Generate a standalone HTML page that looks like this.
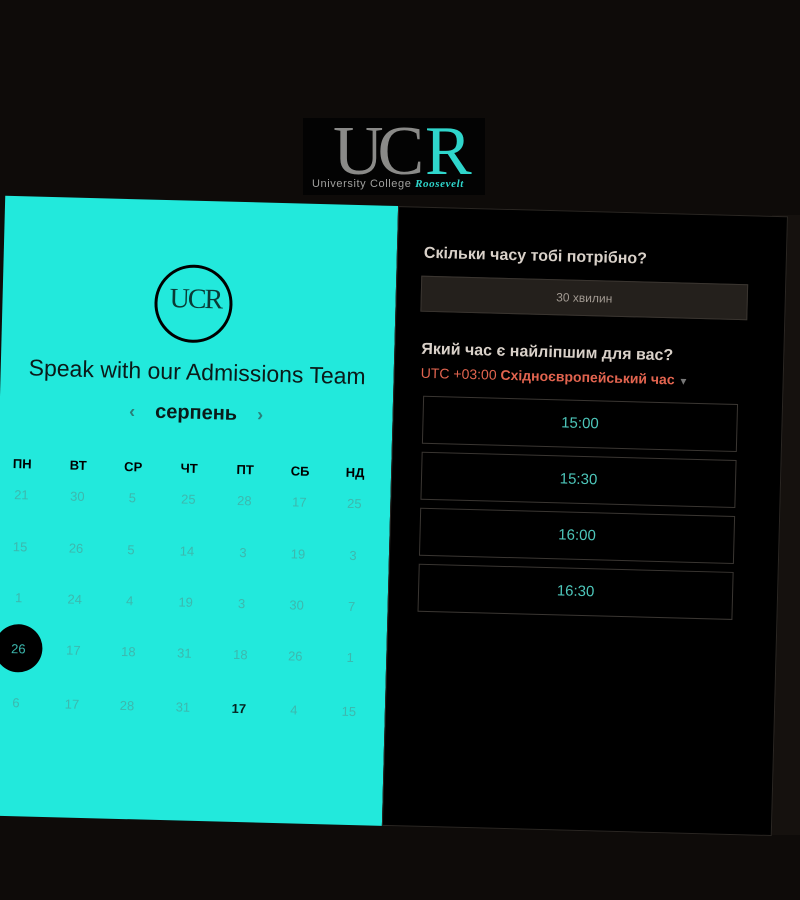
<!DOCTYPE html>
<html><head><meta charset="utf-8"><style>
html,body{margin:0;padding:0;}
body{width:800px;height:900px;background:#0e0b09;position:relative;overflow:hidden;font-family:"Liberation Sans",sans-serif;}
.strip{position:absolute;left:772px;top:215px;width:28px;height:620px;background:#15110e;}
.logo{position:absolute;left:303px;top:118px;width:182px;height:77px;background:#030303;}
.logo .u{position:absolute;left:30px;top:-6px;font-family:"Liberation Serif",serif;font-size:70px;color:#8a8a88;letter-spacing:-6px;}
.logo .r{position:absolute;left:122px;top:-6px;font-family:"Liberation Serif",serif;font-size:70px;color:#2fd6cc;}
.logo .t{position:absolute;left:9px;top:60px;font-size:11px;color:#a0a09e;letter-spacing:0.6px;white-space:nowrap;}
.logo .t i{color:#2fd6cc;font-family:"Liberation Serif",serif;font-weight:bold;}
.card{position:absolute;left:-3px;top:206px;width:783px;height:620px;transform:rotate(1.5deg);transform-origin:395px 310px;}
.left{position:absolute;left:0;top:0;width:393px;height:620px;background:#22e9dc;}
.right{position:absolute;left:393px;top:0;width:390px;height:620px;background:#000;border:1px solid #2a2622;box-sizing:border-box;}
.a{position:absolute;white-space:nowrap;}
.circ{left:152px;top:64px;width:72px;height:72px;border:3px solid #000;border-radius:50%;}
.circ span{position:absolute;left:12px;top:16px;font-family:"Liberation Serif",serif;font-size:28px;color:#0a3a36;letter-spacing:-2px;}
.title{left:0;width:393px;text-align:center;top:158px;font-size:23px;color:#0b1a19;}
.month{left:0;width:393px;text-align:center;top:201px;font-size:20px;font-weight:bold;color:#0b1a19;}
.month b{color:#2a7e78;font-size:18px;margin:0 20px;}
.h{font-size:13px;font-weight:bold;color:#000;transform:translateX(-50%);}
.d{font-size:13px;color:#3cb8ae;transform:translateX(-50%);}
.sel{width:48px;height:48px;border-radius:50%;background:#000;transform:translate(-50%,-50%);}
.q{font-size:16px;font-weight:bold;color:#d9d1c9;}
.dd{left:24px;top:68px;width:327px;height:36px;background:#24201c;border:1px solid #3a3530;box-sizing:border-box;text-align:center;line-height:34px;font-size:12px;color:#a29a92;}
.tz{font-size:14px;color:#e2644f;}
.slot{left:29px;width:315px;height:48px;border:1px solid #3a3632;box-sizing:border-box;text-align:center;line-height:46px;font-size:15px;color:#4dc6ba;}
</style></head><body>
<div class="strip"></div>
<div class="logo"><span class="u">UC</span><span class="r">R</span><div class="t">University College <i>Roosevelt</i></div></div>
<div class="card">
<div class="left">
<div class="a circ"><span>UCR</span></div>
<div class="a title">Speak with our Admissions Team</div>
<div class="a month"><b>‹</b>серпень<b>›</b></div>
<div class="a h" style="left:24px;top:260px">ПН</div><div class="a h" style="left:80px;top:260px">ВТ</div><div class="a h" style="left:135px;top:260px">СР</div><div class="a h" style="left:191px;top:260px">ЧТ</div><div class="a h" style="left:247px;top:260px">ПТ</div><div class="a h" style="left:302px;top:260px">СБ</div><div class="a h" style="left:357px;top:260px">НД</div>
<div class="a d" style="left:24px;top:291px">21</div><div class="a d" style="left:80px;top:291px">30</div><div class="a d" style="left:135px;top:291px">5</div><div class="a d" style="left:191px;top:291px">25</div><div class="a d" style="left:247px;top:291px">28</div><div class="a d" style="left:302px;top:291px">17</div><div class="a d" style="left:357px;top:291px">25</div>
<div class="a d" style="left:24px;top:343px">15</div><div class="a d" style="left:80px;top:343px">26</div><div class="a d" style="left:135px;top:343px">5</div><div class="a d" style="left:191px;top:343px">14</div><div class="a d" style="left:247px;top:343px">3</div><div class="a d" style="left:302px;top:343px">19</div><div class="a d" style="left:357px;top:343px">3</div>
<div class="a d" style="left:24px;top:394px">1</div><div class="a d" style="left:80px;top:394px">24</div><div class="a d" style="left:135px;top:394px">4</div><div class="a d" style="left:191px;top:394px">19</div><div class="a d" style="left:247px;top:394px">3</div><div class="a d" style="left:302px;top:394px">30</div><div class="a d" style="left:357px;top:394px">7</div>
<div class="a sel" style="left:25px;top:452px"></div>
<div class="a d" style="left:25px;top:445px">26</div><div class="a d" style="left:80px;top:445px">17</div><div class="a d" style="left:135px;top:445px">18</div><div class="a d" style="left:191px;top:445px">31</div><div class="a d" style="left:247px;top:445px">18</div><div class="a d" style="left:302px;top:445px">26</div><div class="a d" style="left:357px;top:445px">1</div>
<div class="a d" style="left:24px;top:499px">6</div><div class="a d" style="left:80px;top:499px">17</div><div class="a d" style="left:135px;top:499px">28</div><div class="a d" style="left:191px;top:499px">31</div><div class="a d" style="left:247px;top:499px;color:#06211f;font-weight:bold">17</div><div class="a d" style="left:302px;top:499px">4</div><div class="a d" style="left:357px;top:499px">15</div>
</div>
<div class="right">
<div class="a q" style="left:26px;top:37px">Скільки часу тобі потрібно?</div>
<div class="a dd">30 хвилин</div>
<div class="a q" style="left:26px;top:133px">Який час є найліпшим для вас?</div>
<div class="a tz" style="left:26px;top:157px">UTC +03:00 <b>Східноєвропейський час</b> <span style="color:#777;font-size:10px">▼</span></div>
<div class="a slot" style="top:188px">15:00</div>
<div class="a slot" style="top:244px">15:30</div>
<div class="a slot" style="top:300px">16:00</div>
<div class="a slot" style="top:356px">16:30</div>
</div>
</div>
</body></html>
